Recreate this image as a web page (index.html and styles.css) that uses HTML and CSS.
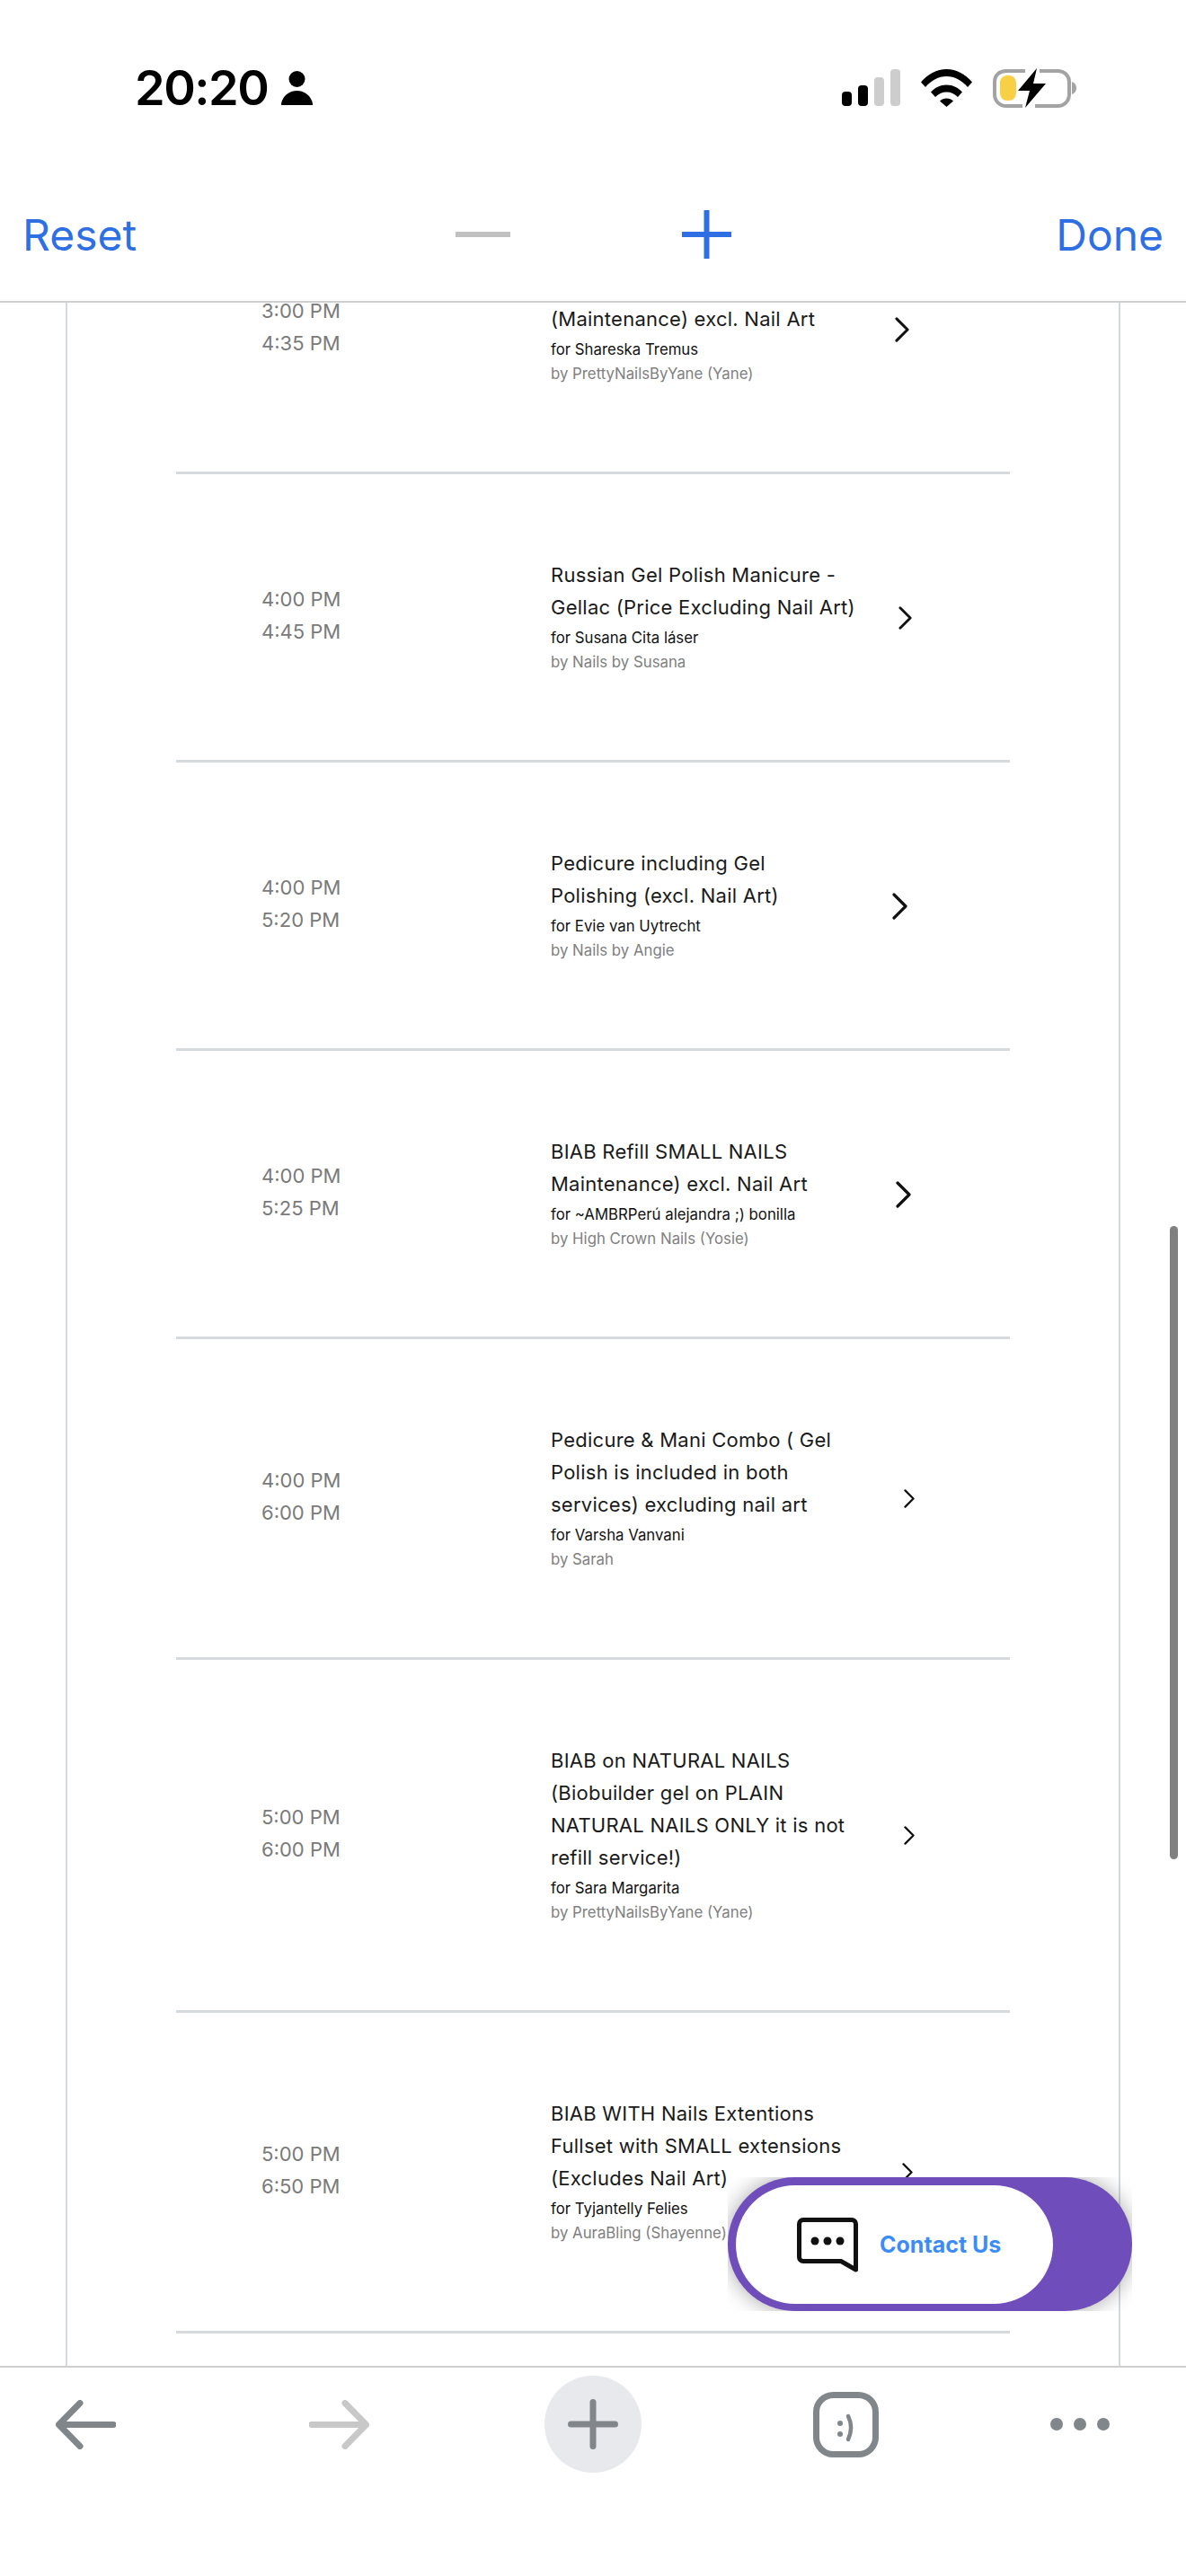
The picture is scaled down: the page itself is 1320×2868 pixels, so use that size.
FILE: index.html
```html
<!DOCTYPE html>
<html lang="en">
<head>
    <meta charset="UTF-8">
    <meta name="viewport" content="width=device-width, initial-scale=1.0">
    <title>Appointments</title>
    <link rel="stylesheet" href="styles.css">
</head>
<body>
    <div class="phone">
        <header class="top">
            <div class="status-bar">
                <div class="status-left">
                    <span class="clock">20:20</span>
                    <svg class="person" viewBox="0 0 35 38"><circle cx="17.5" cy="9" r="9"/><path d="M0 38c0-1 0-3 1-5 3-7 9-11 16.500-11S31 26 34 33c1 2 1 4 1 5z"/></svg>
                </div>
                <div class="status-right">
                    <div class="signal">
                        <span class="bar bar-1"></span>
                        <span class="bar bar-2"></span>
                        <span class="bar bar-3"></span>
                        <span class="bar bar-4"></span>
                    </div>
                    <svg class="wifi" viewBox="0 0 57 42"><path d="M0 14.500C7.500 5.500 17.500 0 28.500 0S49.500 5.500 57 14.500l-5 5.500C45.500 12.500 37.500 8 28.500 8S11.500 12.500 5 20z"/><path d="M11 25.500c4.500-5 10.500-8 17.500-8s13 3 17.500 8l-5 5.500c-3.500-3.500-7.500-5.500-12.500-5.500s-9 2-12.500 5.500z"/><path d="M21 35.500c2-2 4.500-3 7.500-3s5.500 1 7.500 3L28.500 42z"/></svg>
                    <svg class="battery" viewBox="0 0 93 44">
                        <path d="M36 3H15C7.500 3 2 7.500 2 15v14c0 7.500 5.500 13 13 13h18M52 3h20c7.500 0 13 5.500 13 12v14c0 7.500-5.500 13-13 13H47" fill="none" stroke="#a3a3a3" stroke-width="4"/>
                        <path d="M88 15c3 1 5 3.500 5 7s-2 6-5 7z" fill="#a3a3a3"/>
                        <rect x="8" y="8" width="18" height="28" rx="8" fill="#f8d046"/>
                        <path d="M49 0 28 25h13l-5 19 23-27H45z" fill="#000"/>
                    </svg>
                </div>
            </div>
            <div class="toolbar">
                <a class="tool-link">Reset</a>
                <div class="zoom-btns">
                    <span class="minus"></span>
                    <svg class="plus" viewBox="0 0 55 54"><path d="M0 27h55M27.500 0v54" stroke="#2f6fe4" stroke-width="6"/></svg>
                </div>
                <a class="tool-link done">Done</a>
            </div>
        </header>

        <main class="content">
            <div class="list">
                <div class="row row-1">
                    <div class="times"><span>3:00 PM</span><span>4:35 PM</span></div>
                    <div class="details">
                        <div class="name">&nbsp;<br>(Maintenance) excl. Nail Art</div>
                        <div class="client">for Shareska Tremus</div>
                        <div class="staff">by PrettyNailsByYane (Yane)</div>
                    </div>
                    <svg class="chevron" viewBox="0 0 17 30"><path d="M2 2l13 13L2 28"/></svg>
                </div>
                <div class="row row-2">
                    <div class="times"><span>4:00 PM</span><span>4:45 PM</span></div>
                    <div class="details">
                        <div class="name">Russian Gel Polish Manicure -<br>Gellac (Price Excluding Nail Art)</div>
                        <div class="client">for Susana Cita láser</div>
                        <div class="staff">by Nails by Susana</div>
                    </div>
                    <svg class="chevron" viewBox="0 0 17 30"><path d="M2 2l13 13L2 28"/></svg>
                </div>
                <div class="row row-3">
                    <div class="times"><span>4:00 PM</span><span>5:20 PM</span></div>
                    <div class="details">
                        <div class="name">Pedicure including Gel<br>Polishing (excl. Nail Art)</div>
                        <div class="client">for Evie van Uytrecht</div>
                        <div class="staff">by Nails by Angie</div>
                    </div>
                    <svg class="chevron" viewBox="0 0 17 30"><path d="M2 2l13 13L2 28"/></svg>
                </div>
                <div class="row row-4">
                    <div class="times"><span>4:00 PM</span><span>5:25 PM</span></div>
                    <div class="details">
                        <div class="name">BIAB Refill SMALL NAILS<br>Maintenance) excl. Nail Art</div>
                        <div class="client">for ~AMBRPerú alejandra ;) bonilla</div>
                        <div class="staff">by High Crown Nails (Yosie)</div>
                    </div>
                    <svg class="chevron" viewBox="0 0 17 30"><path d="M2 2l13 13L2 28"/></svg>
                </div>
                <div class="row row-5">
                    <div class="times"><span>4:00 PM</span><span>6:00 PM</span></div>
                    <div class="details">
                        <div class="name">Pedicure &amp; Mani Combo ( Gel<br>Polish is included in both<br>services) excluding nail art</div>
                        <div class="client">for Varsha Vanvani</div>
                        <div class="staff">by Sarah</div>
                    </div>
                    <svg class="chevron" viewBox="0 0 17 30"><path d="M2 2l13 13L2 28"/></svg>
                </div>
                <div class="row row-6">
                    <div class="times"><span>5:00 PM</span><span>6:00 PM</span></div>
                    <div class="details">
                        <div class="name">BIAB on NATURAL NAILS<br>(Biobuilder gel on PLAIN<br>NATURAL NAILS ONLY it is not<br>refill service!)</div>
                        <div class="client">for Sara Margarita</div>
                        <div class="staff">by PrettyNailsByYane (Yane)</div>
                    </div>
                    <svg class="chevron" viewBox="0 0 17 30"><path d="M2 2l13 13L2 28"/></svg>
                </div>
                <div class="row row-7">
                    <div class="times"><span>5:00 PM</span><span>6:50 PM</span></div>
                    <div class="details">
                        <div class="name">BIAB WITH Nails Extentions<br>Fullset with SMALL extensions<br>(Excludes Nail Art)</div>
                        <div class="client">for Tyjantelly Felies</div>
                        <div class="staff">by AuraBling (Shayenne)</div>
                    </div>
                    <svg class="chevron" viewBox="0 0 17 30"><path d="M2 2l13 13L2 28"/></svg>
                </div>
            </div>
        </main>

        <footer class="bottom">
            <svg class="arrow" viewBox="0 0 67 55"><path d="M64 27.500H4M27 3.500 3.500 27.500 27 51.500" stroke="#81868a"/></svg>
            <svg class="arrow" viewBox="0 0 67 55"><path d="M3 27.500h60M40 3.500l23.500 24L40 51.500" stroke="#c8c8c8"/></svg>
            <div class="add-btn">
                <svg class="add-plus" viewBox="0 0 56 56"><path d="M3.500 28h49M28 3.500v49"/></svg>
            </div>
            <svg class="smile" viewBox="0 0 73 73">
                <rect x="3.500" y="3.500" width="66" height="66" rx="19" fill="none" stroke="#81868a" stroke-width="7"/>
                <circle cx="30" cy="35" r="3" fill="#81868a"/>
                <circle cx="30" cy="47" r="3" fill="#81868a"/>
                <path d="M39 27c4 8 4 17 0 26" fill="none" stroke="#81868a" stroke-width="4.500" stroke-linecap="round"/>
            </svg>
            <div class="more"><span></span><span></span><span></span></div>
        </footer>

        <div class="contact">
            <div class="contact-pill">
                <div class="contact-inner">
                    <svg class="chat" viewBox="0 0 68 61">
                        <path d="M7 2.500h54c2.500 0 4.500 2 4.500 4.500v51L49 48.500H7c-2.500 0-4.500-2-4.500-4.500V7c0-2.500 2-4.500 4.500-4.500z" fill="none" stroke="#111" stroke-width="5" stroke-linejoin="round"/>
                        <circle cx="20" cy="26" r="4.500" fill="#111"/>
                        <circle cx="34" cy="26" r="4.500" fill="#111"/>
                        <circle cx="48" cy="26" r="4.500" fill="#111"/>
                    </svg>
                    <span class="contact-text">Contact Us</span>
                </div>
            </div>
        </div>

        <div class="scrollbar"></div>
    </div>
</body>
</html>
```

FILE: styles.css
```css
* {
    box-sizing: border-box;
}
body {
    margin: 0;
    background-color: white;
    font-family: Inter, "Liberation Sans", sans-serif;
}
.phone {
    position: relative;
    width: 1320px;
    height: 2868px;
    display: flex;
    flex-direction: column;
    overflow: hidden;
}
.top {
    flex: none;
    height: 337px;
    border-bottom: 2px solid #cfcfcf;
    background-color: white;
}
.status-bar {
    display: flex;
    justify-content: space-between;
    align-items: center;
    height: 120px;
    padding: 75px 122px 0 150px;
}
.status-left {
    display: flex;
    align-items: center;
    gap: 15px;
}
.clock {
    font-size: 54px;
    font-weight: 600;
    line-height: 44px;
    letter-spacing: -1.5px;
    color: black;
}
.person {
    width: 35px;
    height: 38px;
}
.status-right {
    display: flex;
    align-items: center;
    gap: 23px;
}
.signal {
    display: flex;
    align-items: flex-end;
    gap: 7px;
    height: 41px;
}
.bar {
    width: 11px;
    border-radius: 4px;
    background-color: black;
}
.bar-1 { height: 16px; }
.bar-2 { height: 23px; }
.bar-3 { height: 32px; background-color: #cdcdcd; }
.bar-4 { height: 41px; background-color: #cdcdcd; }
.wifi {
    width: 57px;
    height: 42px;
}
.battery {
    width: 93px;
    height: 44px;
}
.toolbar {
    display: grid;
    grid-template-columns: 1fr auto 1fr;
    align-items: center;
    height: 96px;
    padding: 0 25px;
    margin-top: 93px;
}
.tool-link {
    font-size: 48px;
    color: #2f6fe4;
}
.done {
    text-align: right;
}
.zoom-btns {
    display: flex;
    align-items: center;
    gap: 191px;
}
.minus {
    width: 61px;
    height: 6px;
    background-color: #c0c0c0;
}
.plus {
    width: 55px;
    height: 54px;
}
.content {
    flex: 1;
    min-height: 0;
    display: flex;
    flex-direction: column;
    justify-content: flex-end;
    overflow: hidden;
    margin: 0 73px;
    padding: 0 121px 36px;
    border-left: 2px solid #d3d9df;
    border-right: 2px solid #d3d9df;
}
.list {
    flex: none;
}
.row {
    display: flex;
    align-items: center;
    padding: 94px 0 95px;
    border-bottom: 3px solid #d5dade;
}
.times {
    flex: none;
    display: flex;
    flex-direction: column;
    width: 417px;
    margin-bottom: 3px;
    padding-left: 95px;
    font-size: 22px;
    line-height: 36px;
    color: #7a7a7a;
}
.details {
    flex: none;
    width: 370px;
}
.name {
    margin-bottom: 3px;
    font-size: 22px;
    line-height: 36px;
    letter-spacing: 0.25px;
    color: #1a1a1a;
}
.client {
    font-size: 16.8px;
    line-height: 27px;
    color: #111;
}
.staff {
    font-size: 16.8px;
    line-height: 27px;
    color: #808080;
}
.chevron {
    flex: none;
    margin-top: 2px;
}
.chevron path {
    fill: none;
    stroke: #111;
    stroke-width: 3.2;
    stroke-linecap: round;
    stroke-linejoin: round;
}
.row-1 .chevron { width: 16px; height: 28px; margin-left: 13px; }
.row-2 .chevron { width: 15px; height: 26px; margin-left: 17px; }
.row-3 .chevron { width: 17px; height: 30px; margin-left: 10px; }
.row-4 .chevron { width: 17px; height: 30px; margin-left: 14px; }
.row-5 .chevron { width: 12px; height: 21px; margin-left: 23px; }
.row-6 .chevron { width: 12px; height: 21px; margin-left: 23px; }
.row-7 .chevron { width: 12px; height: 21px; margin-left: 21px; }
.bottom {
    flex: none;
    display: grid;
    grid-template-columns: 282px 262px 299px 264px 67px;
    align-items: center;
    justify-items: start;
    height: 234px;
    padding: 9px 0 117px 62px;
    border-top: 2px solid #cfcfcf;
    background-color: white;
}
.arrow {
    width: 67px;
    height: 55px;
}
.arrow path {
    fill: none;
    stroke-width: 7;
    stroke-linecap: round;
    stroke-linejoin: round;
}
.add-btn {
    display: flex;
    align-items: center;
    justify-content: center;
    width: 108px;
    height: 108px;
    border-radius: 50%;
    background-color: #e8e9ed;
}
.add-plus {
    width: 56px;
    height: 56px;
}
.add-plus path {
    fill: none;
    stroke: #81868a;
    stroke-width: 7;
    stroke-linecap: round;
}
.smile {
    width: 73px;
    height: 73px;
}
.more {
    display: flex;
    gap: 12px;
}
.more span {
    width: 14px;
    height: 14px;
    border-radius: 50%;
    background-color: #81868a;
}
.contact {
    position: absolute;
    left: 810px;
    top: 2424px;
    width: 450px;
    height: 149px;
    overflow: hidden;
}
.contact-pill {
    height: 100%;
    padding: 9px 88px 8px 9px;
    border-radius: 75px;
    background-color: #6f4ebb;
    box-shadow: 0 0 24px rgba(0, 0, 0, 0.35);
}
.contact-inner {
    display: flex;
    align-items: center;
    gap: 24px;
    height: 100%;
    padding-left: 68px;
    border-radius: 66px;
    background-color: white;
}
.chat {
    flex: none;
    width: 68px;
    height: 61px;
}
.contact-text {
    font-size: 25px;
    font-weight: 700;
    color: #3b8cf7;
}
.scrollbar {
    position: absolute;
    left: 1302px;
    top: 1365px;
    width: 9px;
    height: 705px;
    border-radius: 5px;
    background-color: #808080;
}
```
